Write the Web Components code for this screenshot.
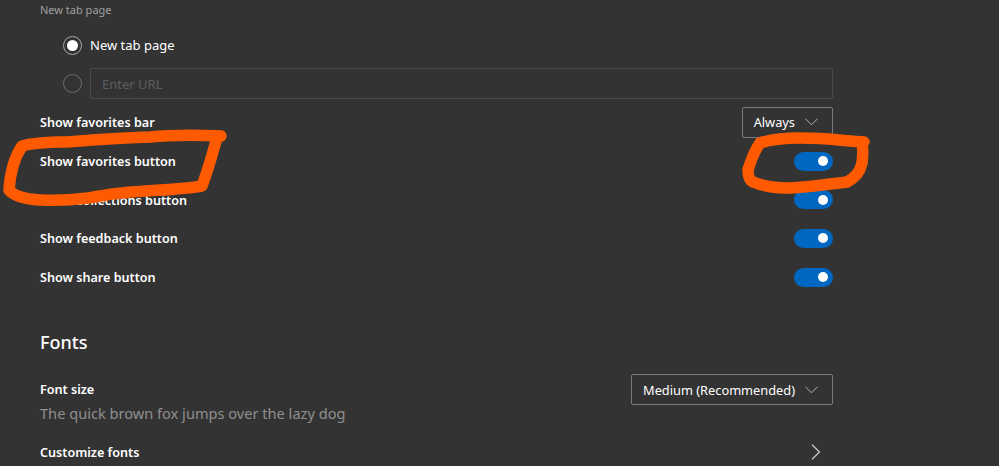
<!DOCTYPE html>
<html>
<head>
<meta charset="utf-8">
<style>
  html, body { margin: 0; height: 466px; overflow: hidden; background: #333; }
  body { font-family: "Noto Sans", "Liberation Sans", sans-serif; color: #fff; position: relative; }
</style>
</head>
<body>
<settings-page>
  <setting-caption>New tab page</setting-caption>
  <radio-group>
    <radio-row checked><span>New tab page</span></radio-row>
    <radio-row><url-input placeholder="Enter URL"></url-input></radio-row>
  </radio-group>
  <setting-row class="first" label="Show favorites bar"><drop-down>Always</drop-down></setting-row>
  <setting-row label="Show favorites button"><toggle-switch></toggle-switch></setting-row>
  <setting-row label="Show collections button"><toggle-switch></toggle-switch></setting-row>
  <setting-row label="Show feedback button"><toggle-switch></toggle-switch></setting-row>
  <setting-row label="Show share button"><toggle-switch></toggle-switch></setting-row>
  <section-title>Fonts</section-title>
  <setting-row class="tall" label="Font size" hint="The quick brown fox jumps over the lazy dog"><drop-down>Medium (Recommended)</drop-down></setting-row>
  <setting-row class="last" label="Customize fonts"><chevron-right></chevron-right></setting-row>
</settings-page>
<marker-scribble></marker-scribble>

<script>
function define(name, html) {
  customElements.define(name, class extends HTMLElement {
    constructor() {
      super();
      this.attachShadow({ mode: 'open' }).innerHTML = html;
    }
  });
}

define('settings-page', `
  <style>
    :host { display: flex; flex-direction: column; width: 793px; padding: 1px 0 0 40px; }
  </style>
  <slot></slot>`);

define('setting-caption', `
  <style>
    :host { display: block; font-size: 11px; line-height: 18px; color: #a0a0a0; }
  </style>
  <slot></slot>`);

define('section-title', `
  <style>
    :host { display: block; font-size: 18px; font-weight: 500; line-height: 24px; margin-top: 34px; margin-bottom: 20px; }
  </style>
  <slot></slot>`);

define('radio-group', `
  <style>
    :host { display: flex; flex-direction: column; gap: 13px; padding: 16px 0 0 23px; }
  </style>
  <slot></slot>`);

customElements.define('radio-row', class extends HTMLElement {
  constructor() {
    super();
    const on = this.hasAttribute('checked');
    this.attachShadow({ mode: 'open' }).innerHTML = `
      <style>
        :host { display: flex; align-items: center; gap: 8px; min-height: 20px; font-size: 13px; color: #fff; }
        .ring { width: 17px; height: 17px; border-radius: 50%; border: 1px solid ${on ? '#a8a8a8' : '#6e6e6e'}; display: flex; align-items: center; justify-content: center; flex: none; }
        .dot { width: 11px; height: 11px; border-radius: 50%; background: #fff; }
      </style>
      <div class="ring">${on ? '<div class="dot"></div>' : ''}</div>
      <slot></slot>`;
  }
});

customElements.define('url-input', class extends HTMLElement {
  constructor() {
    super();
    this.attachShadow({ mode: 'open' }).innerHTML = `
      <style>
        :host { display: flex; flex: 1; align-items: center; height: 29px; border: 1px solid #4a4a4a; border-radius: 2px; padding-left: 11px; font-size: 13px; color: #5e5e5e; }
      </style>
      ${this.getAttribute('placeholder')}`;
  }
});

customElements.define('setting-row', class extends HTMLElement {
  constructor() {
    super();
    const hint = this.getAttribute('hint');
    this.attachShadow({ mode: 'open' }).innerHTML = `
      <style>
        :host { display: flex; align-items: center; justify-content: space-between; height: 38.7px; }
        :host(.first) { margin-top: 4px; }
        :host(.tall) { height: 56px; align-items: flex-start; }
        :host(.last) { margin-top: 2px; }
        .text { padding-top: 2px; }
        :host(.tall) .text { padding-top: 7px; }
        .label { font-size: 12.6px; font-weight: 600; line-height: 18px; }
        .hint { font-size: 14.6px; line-height: 20px; color: #8f8f8f; margin-top: 4px; }
      </style>
      <div class="text"><div class="label">${this.getAttribute('label')}</div>${hint ? `<div class="hint">${hint}</div>` : ''}</div>
      <slot></slot>`;
  }
});

define('toggle-switch', `
  <style>
    :host { display: flex; align-items: center; justify-content: flex-end; width: 39px; height: 19px; box-sizing: border-box; padding-right: 5px; border-radius: 10px; background: #0067c0; }
    i { display: block; width: 10px; height: 10px; border-radius: 50%; background: #fff; }
  </style>
  <i></i>`);

define('drop-down', `
  <style>
    :host { display: flex; align-items: center; gap: 10px; height: 31px; box-sizing: border-box; padding: 0 14px 0 11px; border: 1px solid #7a7a7a; border-radius: 2px; font-size: 12.8px; color: #fff; }
    svg { display: block; }
  </style>
  <slot></slot>
  <svg width="13" height="8" viewBox="0 0 13 8" fill="none" stroke="#b5b5b5" stroke-width="1"><path d="M.5.8 6.5 6.8 12.5.8"/></svg>`);

define('chevron-right', `
  <style>
    :host { display: block; width: 11px; height: 16px; margin-right: 12px; }
    svg { display: block; }
  </style>
  <svg width="11" height="16" viewBox="0 0 11 16" fill="none" stroke="#d0d0d0" stroke-width="1.2"><path d="M2 .8 9.5 8 2 15.2"/></svg>`);

// hand drawn marker over the screenshot, so it sits on a free canvas
define('marker-scribble', `
  <style>
    :host { position: absolute; left: 0; top: 0; width: 999px; height: 466px; pointer-events: none; }
    svg { display: block; }
    path { fill: none; stroke: #ff5a00; stroke-width: 11.5; stroke-linecap: round; stroke-linejoin: round; }
  </style>
  <svg width="999" height="466" viewBox="0 0 999 466">
    <path d="M221 136C195 135 170 135 150 137C125 138 105 139 80 141C60 143 40 141 22 146C14 158 10 175 9 190C14 196 25 199 40 200C58 201 72 200 88 198C100 196 110 194 122 193C150 190 180 190 202 186C208 170 212 155 217 138"/>
    <path d="M864 142C845 141 828 138 800 138C785 138 772 139 760 143C755 150 751 160 748 170C748 176 749 180 753 182C765 187 778 188 790 188C810 187 828 184 847 182C855 178 860 172 862 163C863 155 863 148 862 143"/>
  </svg>`);
</script>
</body>
</html>
